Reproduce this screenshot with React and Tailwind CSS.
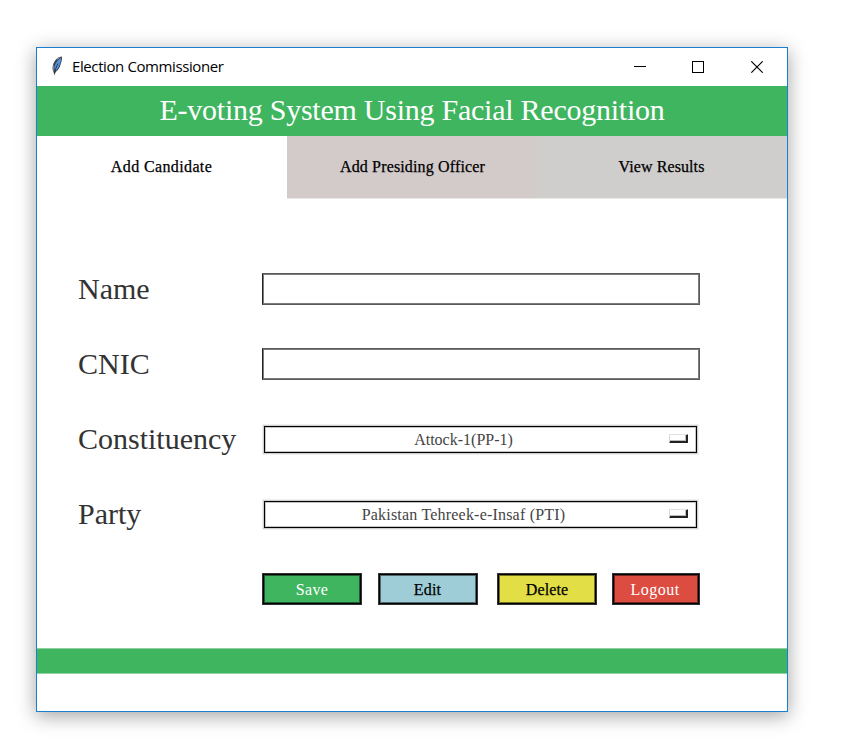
import React from "react";

const serif = "font-['Liberation_Serif','Times_New_Roman',serif]";

function Feather() {
  return (
    <svg className="-mt-[2px] ml-[14px] h-[20px] w-[12px] shrink-0" viewBox="0 0 12 20">
      <path d="M10.800 .6C7 .8 3.300 4.500 2 9C1.200 12 1.500 14 2.600 16.200L3.300 19.600L4.500 16.200C7.300 14.200 8.800 11.500 9.600 8.500C10.500 5.500 11.500 3 10.800 .6Z" fill="#3f4750" />
      <path d="M9.800 2C7 3.500 4.300 7 3.400 11.500L4.100 15.400C6.900 13 8.300 10.300 8.900 7.500C9.600 5.500 10.300 4 9.800 2Z" fill="#5594e2" />
      <path d="M7 7.500C5.600 10 4.600 12.500 3.700 17" fill="none" stroke="#16202e" strokeWidth=".8" />
      <path d="M2.400 9.500C2 11.500 2 13 2.600 14.500M6 3.200L8.500 1.600" fill="none" stroke="#a3abb2" strokeWidth=".9" />
    </svg>
  );
}

function TitleBar() {
  return (
    <div className="flex h-[38px] shrink-0 items-center bg-white">
      <Feather />
      <span className="-mt-[2px] ml-[9px] whitespace-nowrap font-['Open_Sans','Noto_Sans',sans-serif] text-[15px] leading-[20px] tracking-[-0.4px] text-black">
        Election Commissioner
      </span>
      <svg className="ml-auto mr-[24px] h-[12px] w-[129px]" viewBox="0 0 129 12" fill="none" stroke="#000" shapeRendering="crispEdges">
        <path d="M0 5.500H12" />
        <path d="M58.500 .5H69.500V11.500H58.500Z" />
        <path d="M117.300 .3L128.700 11.700M128.700 .3L117.300 11.700" shapeRendering="auto" strokeWidth="1.100" />
      </svg>
    </div>
  );
}

function Label({ children }) {
  return <label className="w-[184px] shrink-0 whitespace-nowrap text-[30px] leading-[30px] text-[#333]">{children}</label>;
}

function TextRow({ label }) {
  return (
    <div className="flex h-[75px] items-center">
      <Label>{label}</Label>
      <div className="mt-px h-[32px] w-[438px] border border-[#5a5a5a] border-l-[#222] bg-white shadow-[inset_0_0_0_1px_#7c7c7c]" />
    </div>
  );
}

function SelectRow({ label, textClass, children }) {
  return (
    <div className="flex h-[75px] items-center">
      <Label>{label}</Label>
      <div className="ml-[2px] mt-[2px] flex h-[27px] w-[433px] items-center border border-black bg-white shadow-[0_0_0_1px_#cfcfcf,0_0_0_2px_#f0f0f0,inset_0_0_0_1px_#c4c4c4]">
        <span className={`ml-[4px] mr-[5px] flex-1 whitespace-nowrap text-center text-[16px] leading-[20px] text-[#444] ${textClass}`}>{children}</span>
        <span className="-mt-[2px] mr-[8px] h-[9px] w-[19px] border border-b-[#222] border-l-[#d8d8d8] border-r-[#222] border-t-[#e2e2e2] shadow-[inset_-1px_-1px_0_#222,inset_-2px_-2px_0_#bbb]" />
      </div>
    </div>
  );
}

const button =
  "flex h-[32px] items-center justify-center border border-[#333] pt-[2px] text-[16px] leading-[20px] shadow-[inset_0_0_0_1px_#000,inset_0_0_0_2px_rgba(0,0,0,0.5)]";
const heavy = "[-webkit-text-stroke:0.25px_#000]";

export default function App() {
  return (
    <div className="flex h-[754px] w-[844px] items-start overflow-hidden bg-white">
      <div className={`ml-[36px] mt-[47px] flex h-[665px] w-[752px] flex-col border border-[#1a7fd0] bg-white shadow-[0_4px_18px_rgba(0,0,0,0.37)] ${serif}`}>
        <TitleBar />
        <div className="flex h-[50px] shrink-0 items-center justify-center bg-[#40b560]">
          <h1 className="-mt-[2px] whitespace-nowrap text-[30px] leading-[34px] tracking-[-0.25px] text-white">E-voting System Using Facial Recognition</h1>
        </div>
        <div className={`flex h-[62px] shrink-0 text-[16px] text-black ${heavy}`}>
          <div className="flex w-[250px] items-center justify-center bg-white pr-[1px] tracking-[0.38px]">Add Candidate</div>
          <div className="flex w-[250px] items-center justify-center bg-[#d3caca] pl-[1px] tracking-[0.15px] shadow-[0_1px_0_#ebe8e8]">Add Presiding Officer</div>
          <div className="flex w-[250px] items-center justify-center bg-[#d0cecc] pr-[1px] tracking-[0.1px] shadow-[0_1px_0_#ebe8e8]">View Results</div>
        </div>
        <div className="flex h-[450px] shrink-0 flex-col pl-[41px] pt-[53px]">
          <TextRow label="Name" />
          <TextRow label="CNIC" />
          <SelectRow label="Constituency" textClass="-translate-x-[3px]">Attock-1(PP-1)</SelectRow>
          <SelectRow label="Party" textClass="-translate-x-[3px] tracking-[0.2px]">Pakistan Tehreek-e-Insaf (PTI)</SelectRow>
          <div className="ml-[184px] mt-[22px] flex">
            <div className={`${button} w-[100px] bg-[#40b560] tracking-[0.4px] text-white`}>Save</div>
            <div className={`${button} ${heavy} ml-[16px] w-[100px] bg-[#9ecdd7] pr-[1px] tracking-[0.2px] text-black`}>Edit</div>
            <div className={`${button} ${heavy} ml-[19px] w-[100px] bg-[#e2de46] tracking-[0.15px] text-black`}>Delete</div>
            <div className={`${button} ml-[15px] w-[88px] bg-[#dc4c40] pr-[2px] tracking-[0.5px] text-white`}>Logout</div>
          </div>
        </div>
        <div className="h-[26px] shrink-0 border-y border-[#8fd2a0] bg-[#40b560]" />
      </div>
    </div>
  );
}
